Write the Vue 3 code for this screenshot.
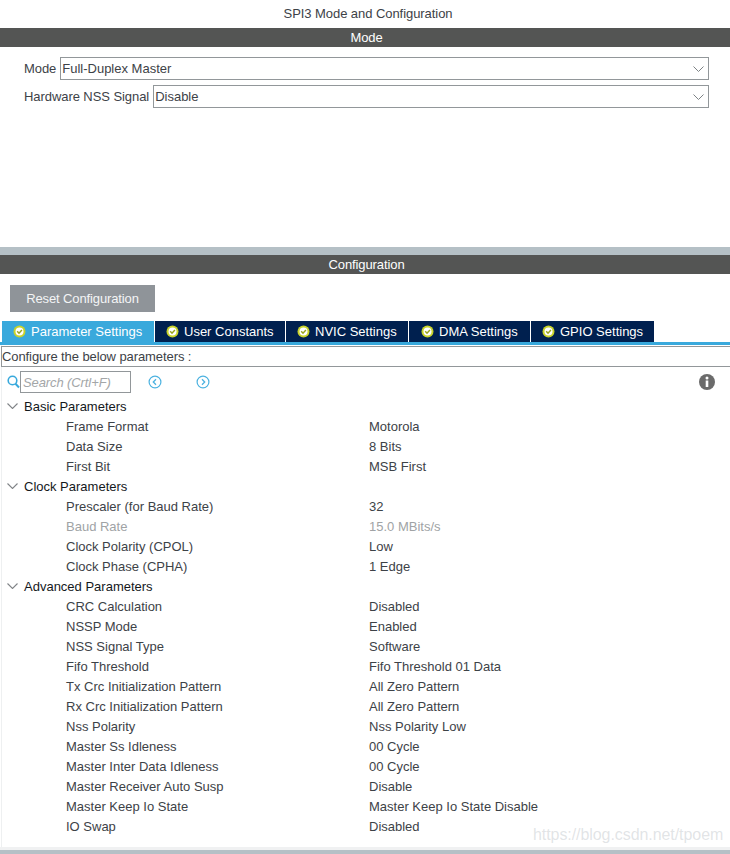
<script setup>
const tabs = [
  { label: 'Parameter Settings', width: 153, pad: 11, active: true },
  { label: 'User Constants', width: 131, pad: 11 },
  { label: 'NVIC Settings', width: 123, pad: 11 },
  { label: 'DMA Settings', width: 122, pad: 12 },
  { label: 'GPIO Settings', width: 124, pad: 11 }
]
const groups = [
  { title: 'Basic Parameters', rows: [
    ['Frame Format', 'Motorola'], ['Data Size', '8 Bits'], ['First Bit', 'MSB First']
  ] },
  { title: 'Clock Parameters', rows: [
    ['Prescaler (for Baud Rate)', '32'], ['Baud Rate', '15.0 MBits/s', true],
    ['Clock Polarity (CPOL)', 'Low'], ['Clock Phase (CPHA)', '1 Edge']
  ] },
  { title: 'Advanced Parameters', rows: [
    ['CRC Calculation', 'Disabled'], ['NSSP Mode', 'Enabled'], ['NSS Signal Type', 'Software'],
    ['Fifo Threshold', 'Fifo Threshold 01 Data'], ['Tx Crc Initialization Pattern', 'All Zero Pattern'],
    ['Rx Crc Initialization Pattern', 'All Zero Pattern'], ['Nss Polarity', 'Nss Polarity Low'],
    ['Master Ss Idleness', '00 Cycle'], ['Master Inter Data Idleness', '00 Cycle'],
    ['Master Receiver Auto Susp', 'Disable'], ['Master Keep Io State', 'Master Keep Io State Disable'],
    ['IO Swap', 'Disabled']
  ] }
]
</script>

<template>
  <div class="page">
    <div class="title">SPI3 Mode and Configuration</div>
    <div class="bar">Mode</div>
    <section class="mode">
      <div class="field">
        <label>Mode</label>
        <div class="select">Full-Duplex Master
          <svg class="caret" width="11" height="6" viewBox="0 0 11 6"><path d="M.5.500 5.500 5.500 10.500.5" fill="none" stroke="#7d8285"/></svg>
        </div>
      </div>
      <div class="field">
        <label>Hardware NSS Signal</label>
        <div class="select">Disable
          <svg class="caret" width="11" height="6" viewBox="0 0 11 6"><path d="M.5.500 5.500 5.500 10.500.5" fill="none" stroke="#7d8285"/></svg>
        </div>
      </div>
    </section>
    <div class="divider"></div>
    <div class="bar">Configuration</div>
    <section class="config">
      <button class="reset">Reset Configuration</button>
      <div class="tabs">
        <div v-for="t in tabs" :key="t.label" class="tab" :class="{ active: t.active }" :style="{ width: t.width + 'px', paddingLeft: t.pad + 'px' }">
          <svg width="13" height="13" viewBox="0 0 13 13">
            <circle cx="6.500" cy="6.500" r="6" fill="#c8d32a"/>
            <circle cx="6.500" cy="6.500" r="4" fill="#fff"/>
            <path d="M4.200 6.300 6 8.200 8.900 5" fill="none" stroke="#9aa51c" stroke-width="1.500"/>
          </svg>
          <span>{{ t.label }}</span>
        </div>
      </div>
      <div class="strip"></div>
      <div class="panel">
        <div class="hint">Configure the below parameters :</div>
        <div class="tools">
          <svg class="search-icon" width="13" height="14" viewBox="0 0 13 14">
            <circle cx="5.500" cy="5.500" r="4.300" fill="none" stroke="#39a9dc" stroke-width="1.600"/>
            <path d="M8.500 8.800 12 12.500" stroke="#39a9dc" stroke-width="2"/>
          </svg>
          <div class="search">Search (Crtl+F)</div>
          <svg class="nav first" width="14" height="14" viewBox="0 0 14 14">
            <circle cx="7" cy="7" r="5.900" fill="none" stroke="#4cb2e0" stroke-width="1.200"/>
            <path d="M8 4.300 5.300 7 8 9.700" fill="none" stroke="#4cb2e0" stroke-width="1.300"/>
          </svg>
          <svg class="nav" width="14" height="14" viewBox="0 0 14 14">
            <circle cx="7" cy="7" r="5.900" fill="none" stroke="#4cb2e0" stroke-width="1.200"/>
            <path d="M6 4.300 8.700 7 6 9.700" fill="none" stroke="#4cb2e0" stroke-width="1.300"/>
          </svg>
          <svg class="info" width="16" height="16" viewBox="0 0 16 16">
            <circle cx="8" cy="8" r="8" fill="#6b6b6b"/>
            <circle cx="8" cy="4" r="1.500" fill="#fff"/>
            <rect x="6.700" y="6.500" width="2.600" height="6.500" fill="#fff"/>
          </svg>
        </div>
        <div class="tree">
          <template v-for="g in groups" :key="g.title">
            <div class="group">
              <svg width="11" height="6" viewBox="0 0 11 6"><path d="M.5.500 5.500 5.500 10.500.5" fill="none" stroke="#808487" stroke-width="1.100"/></svg>
              <span>{{ g.title }}</span>
            </div>
            <div v-for="r in g.rows" :key="r[0]" class="row" :class="{ muted: r[2] }">
              <span class="name">{{ r[0] }}</span>
              <span class="value">{{ r[1] }}</span>
            </div>
          </template>
        </div>
      </div>
    </section>
    <div class="footer"></div>
    <div class="watermark">https://blog.csdn.net/tpoem</div>
  </div>
</template>

<style>
html, body { margin: 0; background: #fff; }
</style>

<style scoped>
.page {
  position: relative;
  width: 730px;
  height: 854px;
  overflow: hidden;
  background: #fff;
  font-family: "Liberation Sans", Arial, sans-serif;
  font-size: 13px;
  color: #3d4247;
  display: flex;
  flex-direction: column;
}
.title {
  height: 28px;
  line-height: 28px;
  text-align: center;
  padding-left: 6px;
  letter-spacing: -0.06px;
}
.bar {
  height: 19px;
  line-height: 19px;
  background: #545554;
  color: #fff;
  text-align: center;
  padding-left: 3px;
  letter-spacing: -0.1px;
}
.mode {
  height: 200px;
  box-sizing: border-box;
  padding: 10px 21px 0 24px;
  display: flex;
  flex-direction: column;
  gap: 5px;
}
.field {
  display: flex;
  align-items: center;
  height: 23px;
  gap: 4px;
}
.field label { white-space: nowrap; letter-spacing: -0.07px; }
.select {
  flex: 1;
  height: 23px;
  line-height: 21px;
  box-sizing: border-box;
  border: 1px solid #92979a;
  padding-left: 1px;
  position: relative;
}
.caret { position: absolute; right: 4px; top: 8px; }
.divider { height: 8px; background: #b5c0c6; }
.config {
  flex: 1;
  min-height: 0;
  display: flex;
  flex-direction: column;
}
.reset {
  width: 145px;
  height: 27px;
  margin: 11px 0 9px 10px;
  padding: 0;
  border: 0;
  background: #8f9499;
  color: #f4f5f6;
  font: inherit;
  letter-spacing: -0.12px;
}
.tabs { display: flex; padding-left: 2px; height: 21px; }
.tab {
  box-sizing: border-box;
  background: #00204f;
  color: #fff;
  display: flex;
  align-items: center;
  gap: 5px;
  border-right: 1px solid #fff;
}
.tab.active { background: #39a9dc; }
.strip { height: 3px; background: #39a9dc; }
.panel {
  flex: 1;
  min-height: 0;
  margin-left: 1px;
  border-left: 1px solid #eef0f1;
  display: flex;
  flex-direction: column;
}
.hint {
  height: 21px;
  box-sizing: border-box;
  margin-top: 1px;
  border: 1px solid #92979a;
  border-right: 0;
  margin-left: -1px;
  line-height: 19px;
  letter-spacing: -0.09px;
}
.tools {
  display: flex;
  align-items: center;
  height: 30px;
  padding-left: 5px;
  box-sizing: border-box;
}
.search {
  width: 111px;
  height: 22px;
  line-height: 21px;
  box-sizing: border-box;
  border: 1px solid #92979a;
  padding-left: 2px;
  color: #a3a6a8;
  font-style: italic;
  letter-spacing: -0.1px;
}
.nav { margin-left: 34px; }
.nav.first { margin-left: 17px; }
.info { margin-left: auto; margin-right: 15px; }
.tree { display: flex; flex-direction: column; }
.group {
  height: 20px;
  line-height: 19px;
  display: flex;
  align-items: flex-start;
  color: #14181c;
}
.group svg { margin: 6px 6px 0 5px; }
.row {
  height: 20px;
  line-height: 20px;
  display: flex;
  padding-left: 64px;
}
.name { width: 303px; }
.muted { color: #a0a3a5; }
.footer { height: 4px; background: #b5c0c6; border-top: 3px solid #f0f1f2; }
.watermark {
  position: absolute;
  left: 533px;
  top: 826px;
  font-size: 16px;
  letter-spacing: -0.07px;
  color: rgba(190, 195, 200, 0.45);
  white-space: nowrap;
}
</style>
